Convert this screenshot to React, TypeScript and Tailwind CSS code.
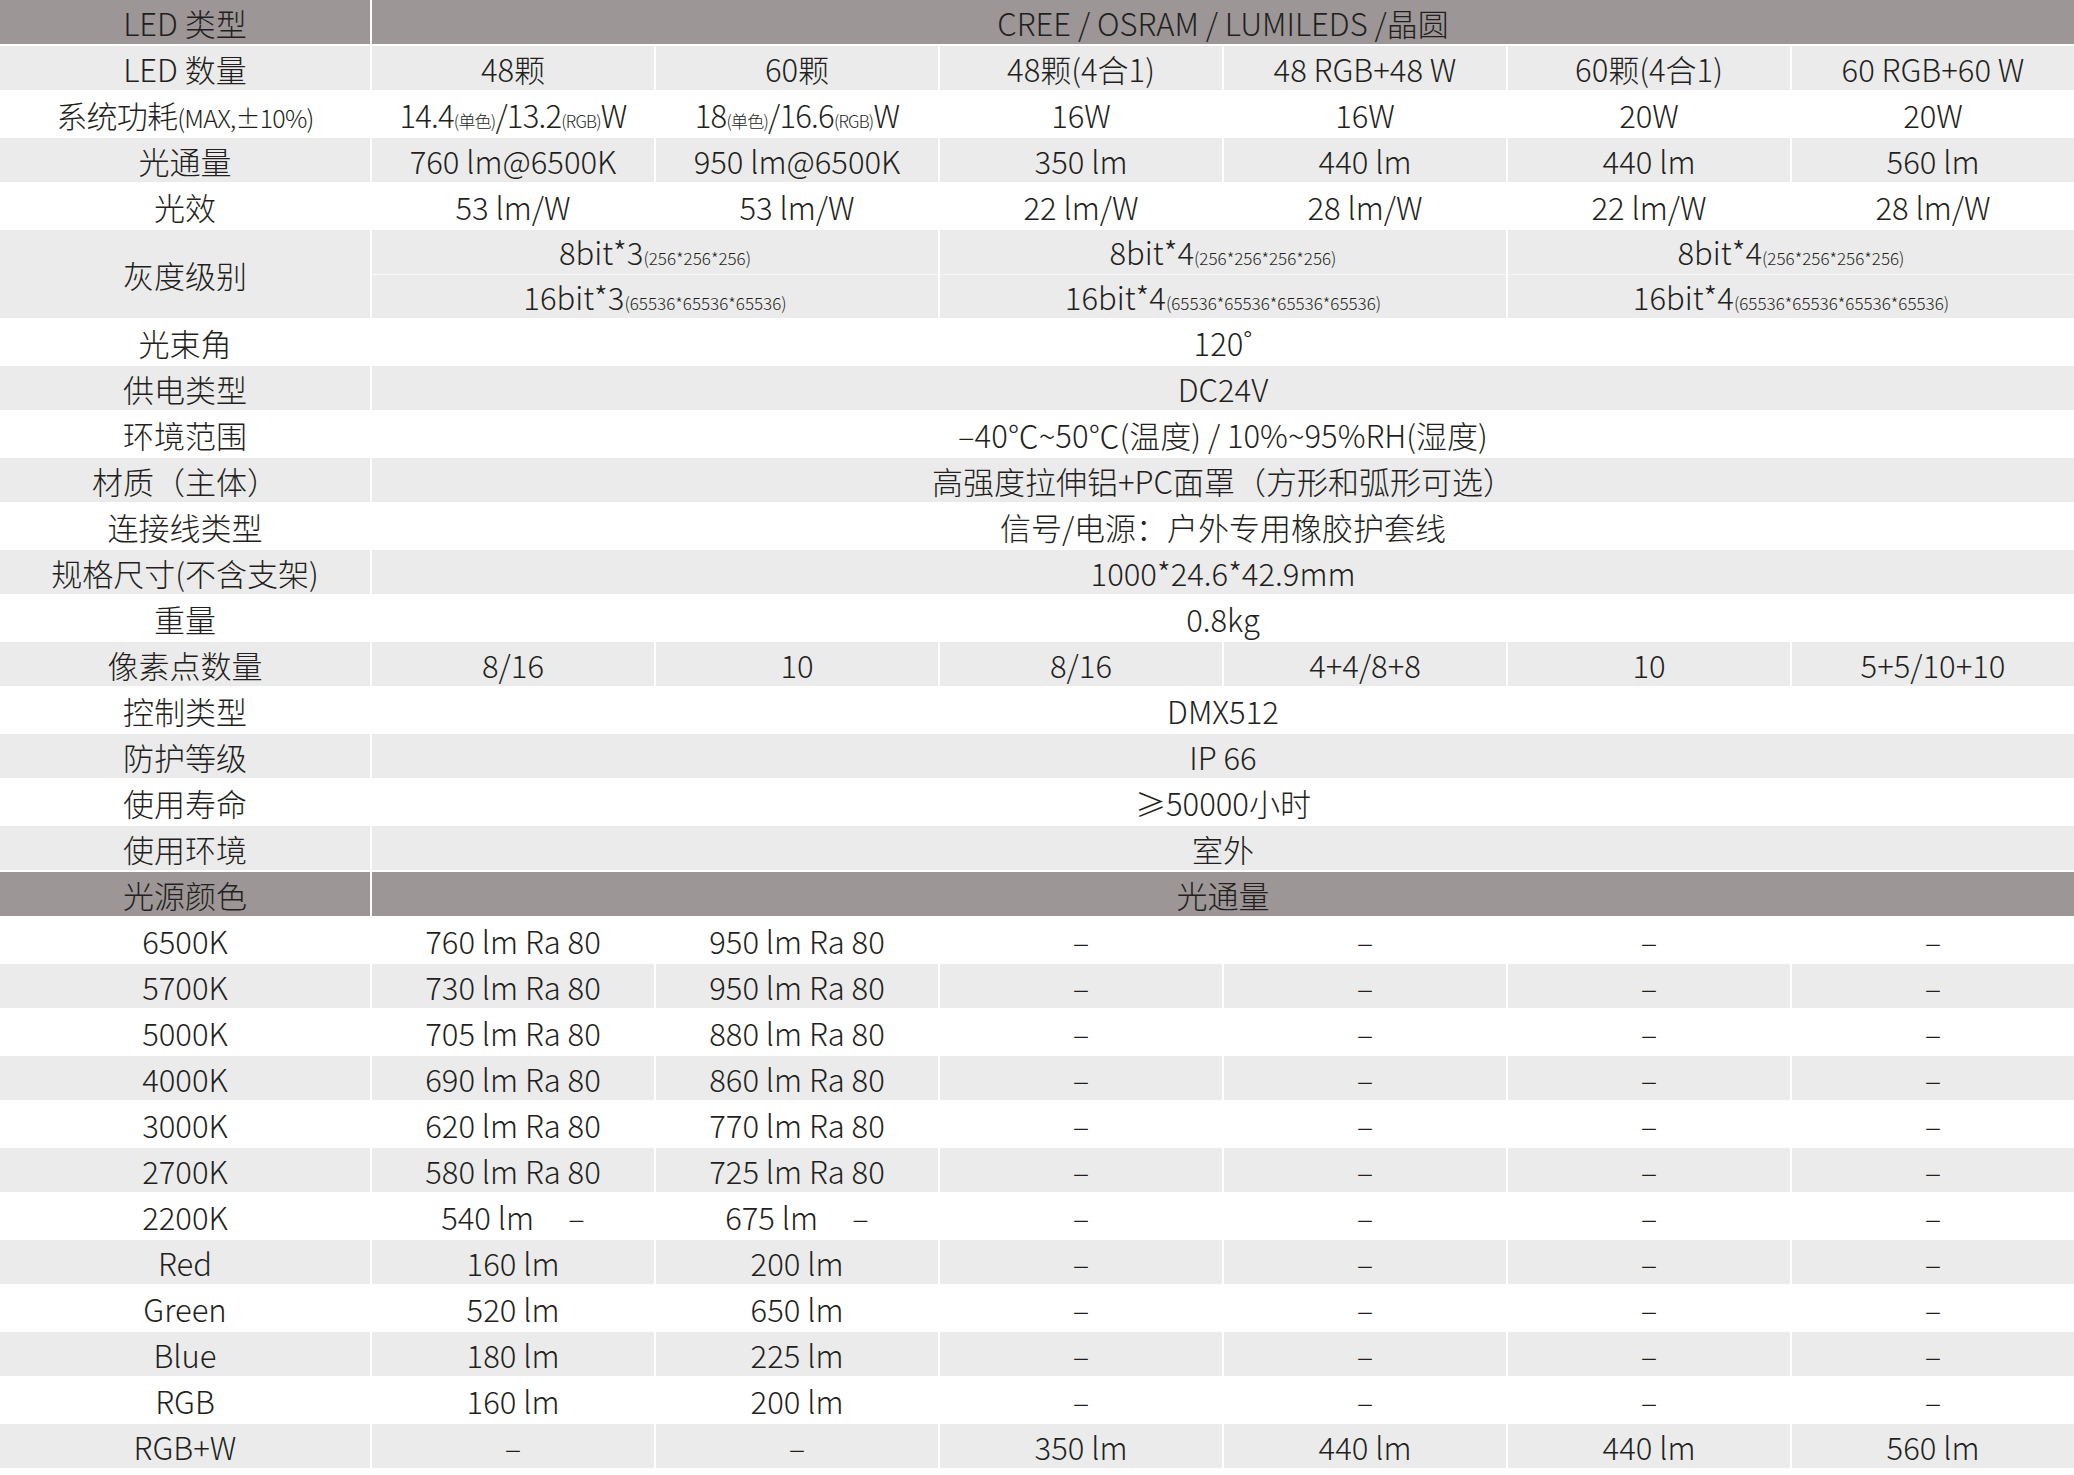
import React from "react";

type Cell = { c: React.ReactNode; span?: number };
const G = "bg-[#ebebeb]";

const sub = (t: string) => <span className="text-[17px]">{t}</span>;

function Row({ label, cells, gray, h = "h-[46px]", header }: { label: React.ReactNode; cells: Cell[]; gray?: boolean; h?: string; header?: boolean }) {
  const bg = header ? "bg-[#9c9796]" : gray ? G : "bg-white";
  return (
    <div className={`flex ${h} gap-[2px] border-b-[2px] border-white`}>
      <div className={`w-[370px] shrink-0 flex items-center justify-center ${bg}`}>{label}</div>
      {cells.map((x, i) => (
        <div key={i} className={`${bg} flex items-center justify-center min-w-0`} style={{ flex: x.span ?? 1 }}>
          {x.c}
        </div>
      ))}
    </div>
  );
}

const six = (a: React.ReactNode[]) => a.map((c) => ({ c }));
const all = (c: React.ReactNode) => [{ c, span: 6 }];

export default function App() {
  const grayBlock = (a: React.ReactNode, b: React.ReactNode) => ({
    span: 2,
    c: (
      <div className="w-full h-full flex flex-col">
        <div className="flex-1 flex items-center justify-center border-b-[1px] border-[#f8f8f8]">{a}</div>
        <div className="flex-1 flex items-center justify-center">{b}</div>
      </div>
    ),
  });
  const dash = "–";
  const lower: [string, string[]][] = [
    ["6500K", ["760 lm Ra 80", "950 lm Ra 80", dash, dash, dash, dash]],
    ["5700K", ["730 lm Ra 80", "950 lm Ra 80", dash, dash, dash, dash]],
    ["5000K", ["705 lm Ra 80", "880 lm Ra 80", dash, dash, dash, dash]],
    ["4000K", ["690 lm Ra 80", "860 lm Ra 80", dash, dash, dash, dash]],
    ["3000K", ["620 lm Ra 80", "770 lm Ra 80", dash, dash, dash, dash]],
    ["2700K", ["580 lm Ra 80", "725 lm Ra 80", dash, dash, dash, dash]],
    ["2200K", ["540 lm\u00a0\u00a0\u00a0\u00a0\u00a0–", "675 lm\u00a0\u00a0\u00a0\u00a0\u00a0–", dash, dash, dash, dash]],
    ["Red", ["160 lm", "200 lm", dash, dash, dash, dash]],
    ["Green", ["520 lm", "650 lm", dash, dash, dash, dash]],
    ["Blue", ["180 lm", "225 lm", dash, dash, dash, dash]],
    ["RGB", ["160 lm", "200 lm", dash, dash, dash, dash]],
    ["RGB+W", [dash, dash, "350 lm", "440 lm", "440 lm", "560 lm"]],
  ];
  return (
    <div
      className="w-[2074px] h-[1475px] bg-white text-[#231f20] text-[31px] font-light leading-none overflow-hidden"
      style={{ fontFamily: '"Noto Sans CJK SC", "Noto Sans", sans-serif' }}
    >
      <Row header label="LED 类型" cells={all("CREE / OSRAM / LUMILEDS /晶圆")} />
      <Row gray label="LED 数量" cells={six(["48颗", "60颗", "48颗(4合1)", "48 RGB+48 W", "60颗(4合1)", "60 RGB+60 W"])} />
      <Row
        label={<span className="tracking-tight">系统功耗<span className="text-[25px]">(MAX,±10%)</span></span>}
        cells={six([
          <span className="tracking-tight">14.4{sub("(单色)")}/13.2{sub("(RGB)")}W</span>,
          <span className="tracking-tight">18{sub("(单色)")}/16.6{sub("(RGB)")}W</span>,
          "16W", "16W", "20W", "20W",
        ])}
      />
      <Row gray label="光通量" cells={six(["760 lm@6500K", "950 lm@6500K", "350 lm", "440 lm", "440 lm", "560 lm"])} />
      <Row label="光效" cells={six(["53 lm/W", "53 lm/W", "22 lm/W", "28 lm/W", "22 lm/W", "28 lm/W"])} />
      <Row
        gray
        h="h-[90px]"
        label="灰度级别"
        cells={[
          grayBlock(<span>8bit*3{sub("(256*256*256)")}</span>, <span>16bit*3{sub("(65536*65536*65536)")}</span>),
          grayBlock(<span>8bit*4{sub("(256*256*256*256)")}</span>, <span>16bit*4{sub("(65536*65536*65536*65536)")}</span>),
          grayBlock(<span>8bit*4{sub("(256*256*256*256)")}</span>, <span>16bit*4{sub("(65536*65536*65536*65536)")}</span>),
        ]}
      />
      <Row label="光束角" cells={all("120˚")} />
      <Row gray label="供电类型" cells={all("DC24V")} />
      <Row label="环境范围" cells={all("–40℃~50℃(温度) / 10%~95%RH(湿度)")} />
      <Row gray label="材质（主体）" cells={all("高强度拉伸铝+PC面罩（方形和弧形可选）")} />
      <Row label="连接线类型" cells={all("信号/电源：户外专用橡胶护套线")} />
      <Row gray label="规格尺寸(不含支架)" cells={all("1000*24.6*42.9mm")} />
      <Row label="重量" cells={all("0.8kg")} />
      <Row gray label="像素点数量" cells={six(["8/16", "10", "8/16", "4+4/8+8", "10", "5+5/10+10"])} />
      <Row label="控制类型" cells={all("DMX512")} />
      <Row gray label="防护等级" cells={all("IP 66")} />
      <Row label="使用寿命" cells={all("≥50000小时")} />
      <Row gray label="使用环境" cells={all("室外")} />
      <Row header label="光源颜色" cells={all("光通量")} />
      {lower.map(([l, v], i) => (
        <Row key={l} gray={i % 2 === 1} label={l} cells={six(v)} />
      ))}
    </div>
  );
}
